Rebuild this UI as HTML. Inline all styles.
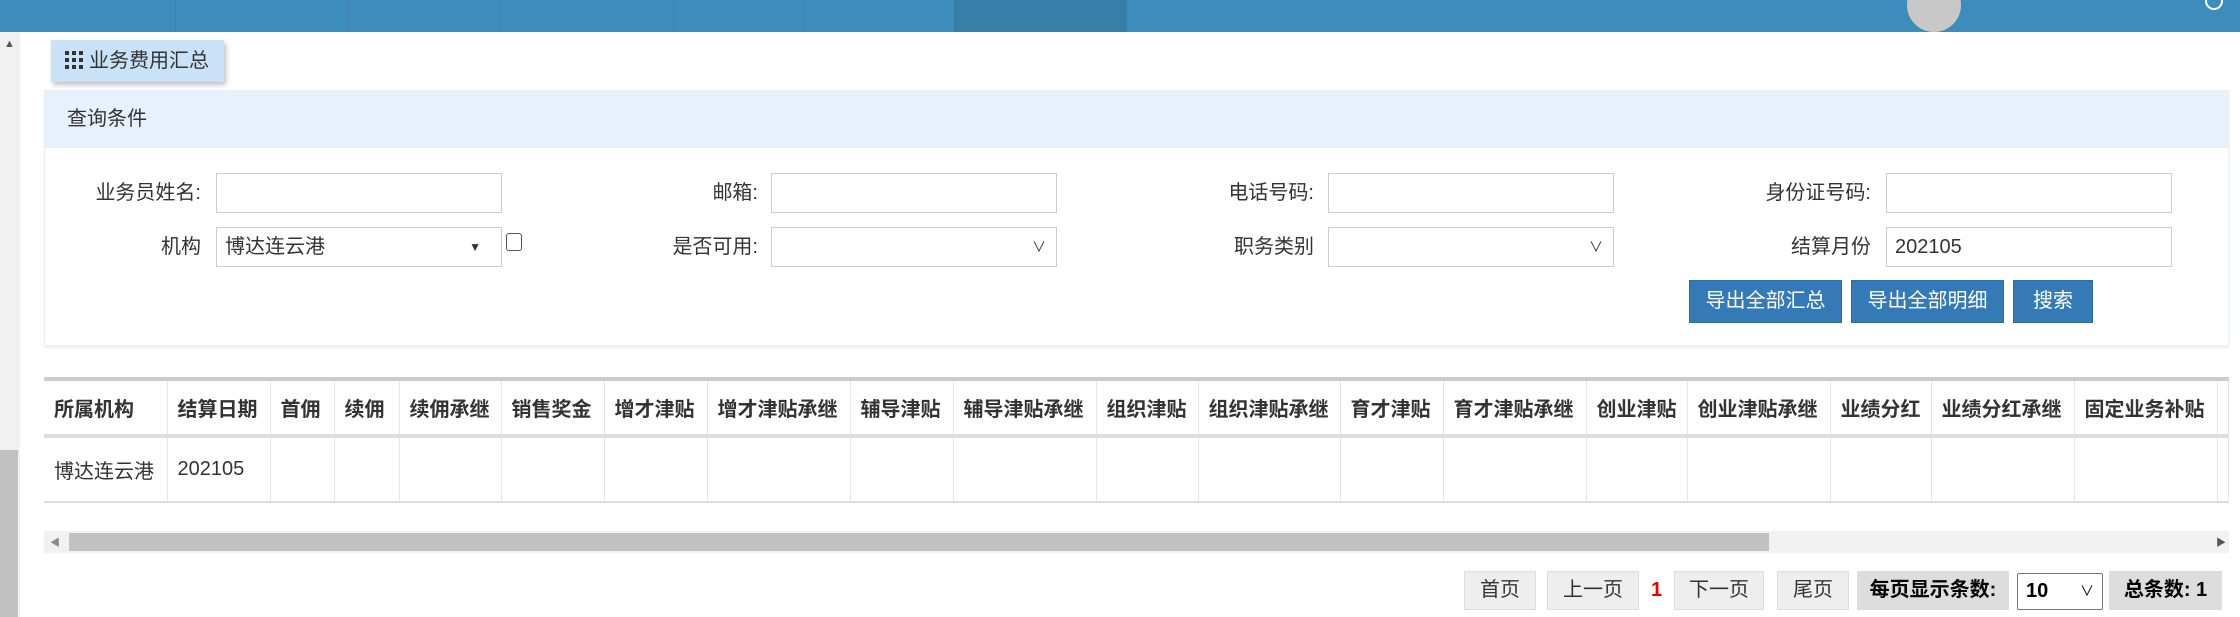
<!DOCTYPE html>
<html><head><meta charset="utf-8"><style>
*{box-sizing:border-box;margin:0;padding:0}
body{width:2240px;height:617px;overflow:hidden;background:#fff;position:relative;font-family:"Liberation Sans","Noto Sans CJK SC",sans-serif;font-size:20px;color:#333}
.a{position:absolute}
.bar{left:0;top:0;width:2240px;height:32px;background:#3c8dbc}
.dv{top:0;width:1px;height:32px;background:#3682ad}
.lbl{text-align:right;width:200px;line-height:40px}
.in{border:1px solid #ccc;height:40px;width:286px;background:#fff;line-height:38px;padding-left:8px}
.btn{background:#337ab7;color:#fff;border:1px solid #2e6da4;height:43px;line-height:41px;text-align:center;font-size:20px}
.pg{background:#eee;border:1px solid #ddd;height:39px;line-height:37px;text-align:center}
table{border-collapse:collapse;position:absolute;left:44px;top:377px;width:2185px}
th{height:57px;border-top:4px solid #ccc;border-bottom:4px solid #ddd;border-right:1px solid #e5e5e5;font-weight:bold;text-align:left;padding-left:10px;white-space:nowrap;font-size:20px;color:#333}
td{height:66px;border-bottom:2px solid #ddd;border-right:1px solid #e5e5e5;padding-left:10px;white-space:nowrap}
</style></head><body>
<div class="a bar"></div>
<div class="a dv" style="left:175px"></div><div class="a dv" style="left:348px"></div><div class="a dv" style="left:500px"></div><div class="a dv" style="left:673px"></div><div class="a dv" style="left:803px"></div>
<div class="a" style="left:954px;top:0;width:173px;height:32px;background:#367fa9"></div>
<div class="a" style="left:1907px;top:-22px;width:54px;height:54px;border-radius:50%;background:#c8c8c8"></div>
<div class="a" style="left:2205px;top:-8px;width:18px;height:18px;border-radius:50%;border:2px solid #fff"></div>
<div class="a" style="left:0;top:32px;width:20px;height:585px;background:#f1f1f1"></div>
<div class="a" style="left:0;top:450px;width:18px;height:167px;background:#c1c1c1"></div>
<div class="a" style="left:4px;top:38px;font-size:11px;color:#555">▲</div>
<div class="a" style="left:51px;top:40px;width:173px;height:42px;background:#c9e2f8;box-shadow:2px 3px 5px rgba(0,0,0,.25);line-height:42px;padding-left:14px;font-size:20px;color:#333">
<span style="display:inline-block;vertical-align:middle;width:18px;height:18px;background:
repeating-linear-gradient(90deg,#333 0 4px,transparent 4px 7px),transparent;-webkit-mask:repeating-linear-gradient(0deg,#000 0 4px,transparent 4px 7px);margin-right:6px;margin-top:-4px"></span>业务费用汇总</div>
<div class="a" style="left:44px;top:90px;width:2185px;height:256px;border:1px solid #e8eef3;box-shadow:0 2px 3px #eee"></div>
<div class="a" style="left:45px;top:91px;width:2183px;height:57px;background:#e6f1fb;line-height:57px;padding-left:22px;color:#333">查询条件</div>
<div class="a lbl" style="left:1px;top:173px">业务员姓名:</div><div class="a in" style="left:216px;top:173px"></div>
<div class="a lbl" style="left:558px;top:173px">邮箱:</div><div class="a in" style="left:771px;top:173px"></div>
<div class="a lbl" style="left:1114px;top:173px">电话号码:</div><div class="a in" style="left:1328px;top:173px"></div>
<div class="a lbl" style="left:1671px;top:173px">身份证号码:</div><div class="a in" style="left:1886px;top:173px"></div>
<div class="a lbl" style="left:1px;top:227px">机构</div><div class="a in" style="left:216px;top:227px">博达连云港<span style="position:absolute;right:20px;font-size:12px">▼</span></div>
<div class="a" style="left:506px;top:233px;width:16px;height:18px;border:1px solid #555;border-radius:3px"></div>
<div class="a lbl" style="left:558px;top:227px">是否可用:</div><div class="a in" style="left:771px;top:227px"><span style="position:absolute;right:10px;font-size:14px">∨</span></div>
<div class="a lbl" style="left:1114px;top:227px">职务类别</div><div class="a in" style="left:1328px;top:227px"><span style="position:absolute;right:10px;font-size:14px">∨</span></div>
<div class="a lbl" style="left:1671px;top:227px">结算月份</div><div class="a in" style="left:1886px;top:227px">202105</div>
<div class="a btn" style="left:1689px;top:280px;width:153px">导出全部汇总</div>
<div class="a btn" style="left:1851px;top:280px;width:153px">导出全部明细</div>
<div class="a btn" style="left:2013px;top:280px;width:80px">搜索</div>
<table><tr>
<th style="width:123px">所属机构</th><th style="width:103px">结算日期</th><th style="width:64px">首佣</th><th style="width:65px">续佣</th><th style="width:102px">续佣承继</th><th style="width:103px">销售奖金</th><th style="width:103px">增才津贴</th><th style="width:143px">增才津贴承继</th><th style="width:103px">辅导津贴</th><th style="width:143px">辅导津贴承继</th><th style="width:102px">组织津贴</th><th style="width:142px">组织津贴承继</th><th style="width:103px">育才津贴</th><th style="width:143px">育才津贴承继</th><th style="width:101px">创业津贴</th><th style="width:143px">创业津贴承继</th><th style="width:101px">业绩分红</th><th style="width:143px">业绩分红承继</th><th style="width:143px">固定业务补贴</th><th></th>
</tr><tr><td>博达连云港</td><td>202105</td><td></td><td></td><td></td><td></td><td></td><td></td><td></td><td></td><td></td><td></td><td></td><td></td><td></td><td></td><td></td><td></td><td></td><td></td></tr></table>
<div class="a" style="left:44px;top:531px;width:2185px;height:22px;background:#f1f1f1"></div>
<div class="a" style="left:69px;top:533px;width:1700px;height:18px;background:#c1c1c1"></div>
<div class="a" style="left:50px;top:534px;font-size:10px;color:#888">◀</div>
<div class="a" style="left:2216px;top:534px;font-size:10px;color:#555">▶</div>
<div class="a pg" style="left:1464px;top:571px;width:72px">首页</div>
<div class="a pg" style="left:1547px;top:571px;width:92px">上一页</div>
<div class="a" style="left:1651px;top:571px;line-height:39px;color:#e00;font-weight:bold">1</div>
<div class="a pg" style="left:1674px;top:571px;width:90px">下一页</div>
<div class="a pg" style="left:1777px;top:571px;width:72px">尾页</div>
<div class="a pg" style="left:1857px;top:571px;width:152px;background:#ddd;font-weight:bold;color:#000">每页显示条数:</div>
<div class="a" style="left:2017px;top:573px;width:86px;height:37px;border:1px solid #777;border-radius:2px;line-height:35px;padding-left:8px;color:#000;font-weight:bold">10<span style="position:absolute;right:8px;font-size:14px;font-weight:normal">∨</span></div>
<div class="a pg" style="left:2109px;top:571px;width:113px;background:#ddd;font-weight:bold;color:#000">总条数: 1</div>
</body></html>
